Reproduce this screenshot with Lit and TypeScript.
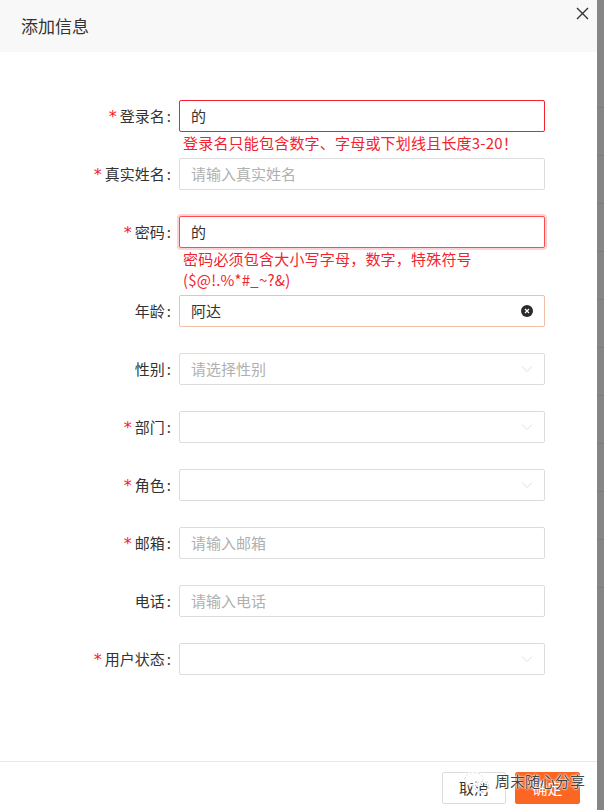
import { LitElement, html, css, nothing } from "lit";
import { customElement } from "lit/decorators.js";

type Row = {
  label: string;
  req?: boolean;
  value?: string;
  placeholder?: string;
  kind?: "error" | "focus" | "hover";
  error?: string[];
  select?: boolean;
  clear?: boolean;
};

const rows: Row[] = [
  { label: "登录名", req: true, value: "的", kind: "error", error: ["登录名只能包含数字、字母或下划线且长度3-20！"] },
  { label: "真实姓名", req: true, placeholder: "请输入真实姓名" },
  { label: "密码", req: true, value: "的", kind: "focus", error: ["密码必须包含大小写字母，数字，特殊符号", "($@!.%*#_~?&)"] },
  { label: "年龄", value: "阿达", kind: "hover", clear: true },
  { label: "性别", placeholder: "请选择性别", select: true },
  { label: "部门", req: true, select: true },
  { label: "角色", req: true, select: true },
  { label: "邮箱", req: true, placeholder: "请输入邮箱" },
  { label: "电话", placeholder: "请输入电话" },
  { label: "用户状态", req: true, select: true },
];

@customElement("app-root")
export class AppRoot extends LitElement {
  static styles = css`
    :host {
      display: flex;
      width: 604px;
      height: 810px;
      overflow: hidden;
      position: relative;
      font-family: "Noto Sans CJK SC", "Liberation Sans", sans-serif;
      font-size: 15px;
      color: #333;
    }
    .dialog {
      width: 597px;
      flex: none;
      height: 810px;
      background: #fff;
      display: flex;
      flex-direction: column;
      position: relative;
    }
    .strip {
      flex: 1;
      height: 810px;
      background-color: #868686;
      background-image: repeating-linear-gradient(
        to bottom,
        #7c7c7c 0,
        #7c7c7c 1px,
        transparent 1px,
        transparent 48px
      );
      background-position: 0 107px;
      background-size: 100% 481px;
      background-repeat: no-repeat;
    }
    .header {
      height: 52px;
      flex: none;
      background: #f8f8f8;
      padding-left: 21px;
      font-size: 17px;
      line-height: 52px;
      color: #333;
    }
    .close {
      position: absolute;
      left: 576px;
      top: 7px;
      width: 13px;
      height: 13px;
    }
    .form {
      flex: 1;
      padding-top: 48px;
      display: flex;
      flex-direction: column;
    }
    .row {
      display: grid;
      grid-template-columns: 172px 366px;
      column-gap: 7px;
    }
    .label {
      height: 32px;
      line-height: 32px;
      text-align: right;
      white-space: nowrap;
      color: #333;
    }
    .colon {
      margin: 0 1px 0 2px;
    }
    .star {
      color: #f5222d;
      margin-right: 3px;
      font-family: "DejaVu Sans", sans-serif;
      font-size: 16px;
      line-height: 1;
    }
    .box {
      box-sizing: border-box;
      height: 32px;
      border: 1px solid #dcdcdc;
      border-radius: 2px;
      padding: 0 11px;
      line-height: 30px;
      display: flex;
      align-items: center;
      justify-content: space-between;
      background: #fff;
    }
    .box.error {
      border-color: #f5222d;
    }
    .box.focus {
      border-color: #ff4d4f;
      box-shadow: 0 0 0 2px rgba(245, 34, 45, 0.2);
    }
    .box.hover {
      border-color: #f0bfa6;
    }
    .ph {
      color: #b0b0b0;
    }
    .value {
      color: #333;
    }
    .gap {
      grid-column: 2;
      min-height: 26px;
      box-sizing: border-box;
    }
    .gap.has {
      padding: 0 0 5px 4px;
      color: #f5222d;
      line-height: 21px;
      letter-spacing: 0.2px;
      white-space: nowrap;
    }
    .gap div {
      height: 21px;
    }
    .icon {
      flex: none;
      display: block;
    }
    .footer {
      flex: none;
      box-sizing: border-box;
      height: 49px;
      border-top: 1px solid #e8e8e8;
      display: flex;
      justify-content: flex-end;
      gap: 9px;
      padding: 10px 17px 0 0;
    }
    .btn {
      box-sizing: border-box;
      height: 32px;
      width: 65px;
      border: 1px solid #dcdcdc;
      border-radius: 2px;
      background: #fff;
      text-align: center;
      line-height: 30px;
      color: #333;
    }
    .btn.cancel {
      width: 64px;
    }
    .btn.primary {
      background: #fc6623;
      border-color: #fc6623;
      color: #fff;
    }
    .mark {
      position: absolute;
      left: 463px;
      top: 768px;
      display: flex;
      align-items: flex-start;
      gap: 4px;
      font-size: 15px;
      line-height: 26px;
      color: #444;
      text-shadow: 0 0 1px #fff, 0 0 2px #fff, 0 0 2px #fff;
      white-space: nowrap;
    }
    .mark svg {
      display: block;
      margin-top: 3px;
    }
  `;

  private renderRow(r: Row) {
    return html`<div class="row">
      <div class="label">${r.req ? html`<span class="star">*</span>` : nothing}${r.label}<span class="colon">:</span></div>
      <div class="box ${r.kind ?? ""}">
        ${r.value
          ? html`<span class="value">${r.value}</span>`
          : html`<span class="ph">${r.placeholder ?? ""}</span>`}
        ${r.clear
          ? html`<svg class="icon" width="12" height="12" viewBox="0 0 12 12">
              <circle cx="6" cy="6" r="6" fill="#2b2b2b"></circle>
              <path d="M4 4l4 4M8 4l-4 4" stroke="#fff" stroke-width="1.2" fill="none"></path>
            </svg>`
          : nothing}
        ${r.select
          ? html`<svg class="icon" width="12" height="8" viewBox="0 0 12 8">
              <path d="M1 1.5l5 5 5-5" stroke="#dedede" stroke-width="1" fill="none"></path>
            </svg>`
          : nothing}
      </div>
      <div class="gap ${r.error ? "has" : ""}">
        ${r.error?.map((l) => html`<div>${l}</div>`)}
      </div>
    </div>`;
  }

  render() {
    return html`<div class="dialog">
        <div class="header">添加信息</div>
        <svg class="close" viewBox="0 0 13 13">
          <path d="M1 1l11 11M12 1L1 12" stroke="#333" stroke-width="1.4" fill="none"></path>
        </svg>
        <div class="form">${rows.map((r) => this.renderRow(r))}</div>
        <div class="footer">
          <div class="btn cancel">取消</div>
          <div class="btn primary">确定</div>
        </div>
      </div>
      <div class="strip"></div>
      <div class="mark">
        <svg width="28" height="24" viewBox="0 0 28 24">
          <ellipse cx="11" cy="8" rx="9" ry="6.5" fill="none" stroke="#fff" stroke-width="2.4"></ellipse>
          <ellipse cx="11" cy="8" rx="9" ry="6.5" fill="none" stroke="#bbb" stroke-width="0.6" stroke-dasharray="2 2"></ellipse>
          <ellipse cx="19" cy="16" rx="7" ry="5.5" fill="none" stroke="#fff" stroke-width="2.4"></ellipse>
          <ellipse cx="19" cy="16" rx="7" ry="5.5" fill="none" stroke="#aaa" stroke-width="0.6" stroke-dasharray="2 2"></ellipse>
        </svg>
        <span>周末随心分享</span>
      </div>`;
  }
}
